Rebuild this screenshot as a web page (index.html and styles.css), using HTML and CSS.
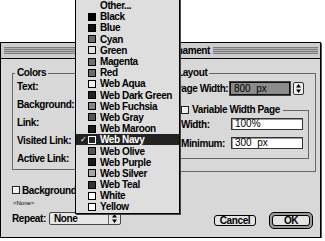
FILE: index.html
```html
<!DOCTYPE html>
<html>
<head>
    <title>Page Properties</title>
    <link rel="stylesheet" href="styles.css">
</head>
<body>
    <div class="dialog">
        <div class="titlebar">
            <span class="stripes"></span>
            <span class="title">Page Ornament</span>
            <span class="stripes stripes-right"></span>
        </div>
        <div class="groups">
            <fieldset class="group colors">
                <legend>Colors</legend>
                <div class="row">Text:</div>
                <div class="row">Background:</div>
                <div class="row">Link:</div>
                <div class="row">Visited Link:</div>
                <div class="row">Active Link:</div>
            </fieldset>
            <fieldset class="group layout">
                <legend>Layout</legend>
                <div class="field-row page-width">
                    <span class="label">Page Width:</span>
                    <span class="textbox selected">800&nbsp; px</span>
                    <span class="stepper">
                        <svg width="5" height="9" viewBox="0 0 5 9"><path d="M2.5 0L5 3.5H0z M2.5 9L0 5.5h5z" fill="#000"/></svg>
                    </span>
                </div>
                <fieldset class="group variable">
                    <legend><span class="check"></span>Variable Width Page</legend>
                    <div class="field-row first">
                        <span class="label">Width:</span>
                        <span class="textbox">100%</span>
                    </div>
                    <div class="field-row second">
                        <span class="label">Minimum:</span>
                        <span class="textbox">300&nbsp; px</span>
                    </div>
                </fieldset>
            </fieldset>
        </div>
        <div class="footer">
            <div class="bg-options">
                <div class="check-row"><span class="check"></span>Background</div>
                <div class="none-label">&lt;None&gt;</div>
                <div class="repeat-row">
                    <span class="repeat-label">Repeat:</span>
                    <span class="popup">
                        <span class="popup-value">None</span>
                        <span class="popup-arrows">
                            <svg width="5" height="9" viewBox="0 0 5 9"><path d="M2.5 0L5 3.5H0z M2.5 9L0 5.5h5z" fill="#000"/></svg>
                        </span>
                    </span>
                </div>
            </div>
            <div class="buttons">
                <button class="btn cancel">Cancel</button>
                <span class="default-ring"><button class="btn ok">OK</button></span>
            </div>
        </div>
    </div>

    <ul class="menu">
        <li><span class="mark"></span><span class="swatch empty"></span>Other...</li>
        <li><span class="mark"></span><span class="swatch" style="background:#000"></span>Black</li>
        <li><span class="mark"></span><span class="swatch" style="background:#111"></span>Blue</li>
        <li><span class="mark"></span><span class="swatch" style="background:#6a6a6a"></span>Cyan</li>
        <li><span class="mark"></span><span class="swatch" style="background:#e2e2e2"></span>Green</li>
        <li><span class="mark"></span><span class="swatch" style="background:#707070"></span>Magenta</li>
        <li><span class="mark"></span><span class="swatch" style="background:#6c6c6c"></span>Red</li>
        <li><span class="mark"></span><span class="swatch" style="background:#eee"></span>Web Aqua</li>
        <li><span class="mark"></span><span class="swatch" style="background:#222"></span>Web Dark Green</li>
        <li><span class="mark"></span><span class="swatch" style="background:#858585"></span>Web Fuchsia</li>
        <li><span class="mark"></span><span class="swatch" style="background:#555"></span>Web Gray</li>
        <li><span class="mark"></span><span class="swatch" style="background:#1a1a1a"></span>Web Maroon</li>
        <li class="selected"><span class="mark">&#10003;</span><span class="swatch" style="background:#222"></span>Web Navy</li>
        <li><span class="mark"></span><span class="swatch" style="background:#555"></span>Web Olive</li>
        <li><span class="mark"></span><span class="swatch" style="background:#1a1a1a"></span>Web Purple</li>
        <li><span class="mark"></span><span class="swatch" style="background:#a5a5a5"></span>Web Silver</li>
        <li><span class="mark"></span><span class="swatch" style="background:#333"></span>Web Teal</li>
        <li><span class="mark"></span><span class="swatch" style="background:#fff"></span>White</li>
        <li><span class="mark"></span><span class="swatch" style="background:#fff"></span>Yellow</li>
    </ul>
</body>
</html>
```

FILE: styles.css
```css
body {
    margin: 0;
    background-color: #fff;
    font-family: "Liberation Sans", Arial, sans-serif;
    font-size: 10px;
    font-weight: bold;
    letter-spacing: -0.4px;
    color: #000;
}

/* dialog window */

.dialog {
    box-sizing: border-box;
    width: 321px;
    height: 196px;
    margin-top: 42px;
    border: 1px solid #000;
    background-color: #d8d8d8;
    box-shadow: 1px 1px 0 #555;
}

.titlebar {
    box-sizing: border-box;
    display: flex;
    align-items: center;
    height: 16px;
    padding: 4px 2px 4px 3px;
    border-bottom: 1px solid #000;
    background-color: #cdcdcd;
}

.stripes {
    flex: 1;
    align-self: stretch;
    background: repeating-linear-gradient(#7c7c7c 0 1px, #b4b4b4 1px 2px);
}

.stripes-right {
    flex: 0 0 105px;
}

.title {
    line-height: 7px;
    padding: 0 3px;
}

/* group boxes */

.groups {
    display: grid;
    grid-template-columns: 154px 146px;
    column-gap: 4px;
    align-items: start;
    padding: 9px 0 0 11px;
}

.group {
    margin: 0;
    padding: 0 4px 1px 2px;
    min-width: 0;
    border: 1px solid #666;
}

.group legend {
    padding: 0 2px;
    line-height: 10px;
}

.colors .row {
    height: 18px;
    line-height: 18px;
    padding-left: 2px;
}

.layout {
    padding: 0 6px 12px 4px;
}

.field-row {
    display: flex;
    align-items: center;
    height: 12px;
}

.page-width {
    height: 13px;
    margin-top: 4px;
}

.page-width .label {
    width: 55px;
}

.label {
    flex: none;
    width: 50px;
}

.textbox {
    box-sizing: border-box;
    display: block;
    height: 12px;
    width: 72px;
    padding-left: 3px;
    border: 1px solid #333;
    background-color: #fff;
    font-weight: normal;
    letter-spacing: 0;
    line-height: 10px;
    box-shadow: inset 1px 1px 0 #999;
}

.textbox.selected {
    width: 60px;
    height: 13px;
    line-height: 11px;
    border-color: #111;
    background-color: #8c8c8c;
    box-shadow: 0 0 0 1px #444;
}

.stepper {
    box-sizing: border-box;
    display: flex;
    align-items: center;
    justify-content: center;
    width: 11px;
    height: 13px;
    margin-left: 3px;
    border: 1px solid #333;
    border-radius: 2px;
    background-color: #efefef;
}

.variable {
    margin-top: 10px;
    padding: 0 3px 9px 5px;
}

.variable legend {
    padding: 0 3px 0 0;
}

.variable .first {
    margin-top: 3px;
}

.variable .second {
    margin-top: 7px;
}

.check {
    box-sizing: border-box;
    display: inline-block;
    width: 8px;
    height: 8px;
    margin-right: 3px;
    vertical-align: -1px;
    border: 1px solid #222;
    background-color: #eee;
    box-shadow: inset 1px 1px 0 #fff;
}

/* footer */

.footer {
    display: flex;
    justify-content: space-between;
    align-items: flex-start;
    padding: 13px 7px 0 11px;
}

.check-row {
    display: flex;
    align-items: center;
    height: 10px;
}

.check-row .check {
    margin-right: 2px;
    vertical-align: 0;
}

.none-label {
    margin-top: 4px;
    padding-left: 1px;
    font-size: 6px;
    font-weight: normal;
    letter-spacing: 0;
    line-height: 8px;
}

.repeat-row {
    display: flex;
    align-items: center;
    height: 13px;
    margin-top: 5px;
}

.repeat-label {
    width: 37px;
}

.popup {
    box-sizing: border-box;
    display: flex;
    align-items: center;
    width: 72px;
    height: 13px;
    border: 1px solid #444;
    border-radius: 2px;
    background-color: #e6e6e6;
}

.popup-value {
    flex: 1;
    padding-left: 4px;
}

.popup-arrows {
    display: flex;
    align-items: center;
    justify-content: center;
    width: 11px;
    height: 100%;
    border-left: 1px solid #666;
}

.buttons {
    display: flex;
    align-items: center;
    gap: 13px;
    margin-top: 27px;
}

.btn {
    box-sizing: border-box;
    height: 11px;
    padding: 0;
    border: 1px solid #000;
    border-radius: 3px;
    background-color: #e4e4e4;
    font: inherit;
    letter-spacing: inherit;
    line-height: 9px;
    color: #000;
}

.cancel {
    width: 42px;
}

.ok {
    width: 38px;
}

.default-ring {
    display: flex;
    padding: 2px;
    border: 1px solid #000;
    border-radius: 5px;
    background-color: #9a9a9a;
}

/* popup colour menu */

.menu {
    position: absolute;
    left: 75px;
    top: -1px;
    box-sizing: border-box;
    width: 105px;
    margin: 0;
    padding: 0;
    list-style: none;
    border: 1px solid #000;
    background-color: #dedede;
    box-shadow: 1px 1px 0 #444;
}

.menu li {
    display: flex;
    align-items: center;
    height: 11.2px;
    padding-left: 4px;
}

.menu .selected {
    background-color: #222;
    color: #fff;
}

.mark {
    width: 8px;
    font-family: "DejaVu Sans", sans-serif;
    font-size: 8px;
    line-height: 8px;
}

.swatch {
    box-sizing: border-box;
    width: 8px;
    height: 8px;
    margin-right: 4px;
    border: 1px solid #000;
}

.swatch.empty {
    border: none;
}

.selected .swatch {
    border-color: #fff;
}
```
